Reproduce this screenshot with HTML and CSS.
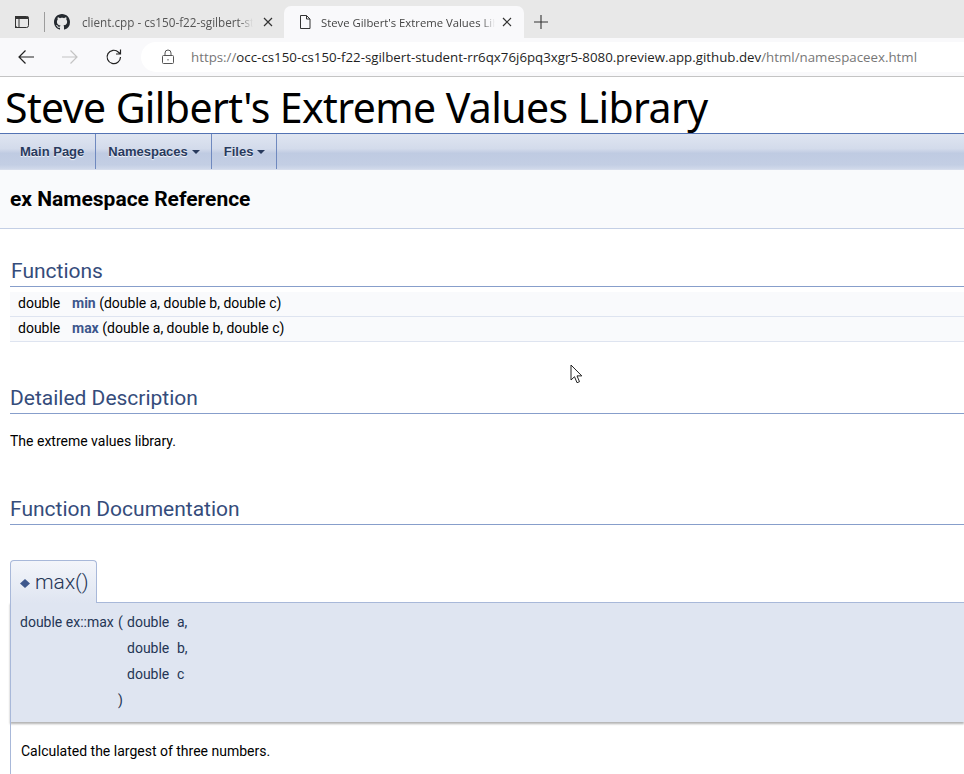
FILE: index.html

```html
<!DOCTYPE html>
<html lang="en">
<head>
  <meta charset="UTF-8">
  <title>Steve Gilbert's Extreme Values Library</title>
  <link rel="stylesheet" href="styles.css">
</head>
<body>
  <div class="tabstrip">
    <svg class="tab-actions" width="16" height="16" viewBox="0 0 16 16"><rect x="1.5" y="2.5" width="13" height="11" rx="2" fill="none" stroke="#333"/><rect x="1.5" y="2.5" width="13" height="2.5" fill="#333"/><rect x="1.5" y="2.5" width="3.5" height="11" fill="none" stroke="#333"/></svg>
    <span class="strip-sep"></span>
    <div class="tab">
      <svg class="favicon" width="16" height="16" viewBox="0 0 16 16"><path fill="#24292f" d="M8 0C3.58 0 0 3.58 0 8c0 3.54 2.29 6.53 5.47 7.59.4.07.55-.17.55-.38 0-.19-.01-.82-.01-1.49-2.01.37-2.53-.49-2.69-.94-.09-.23-.48-.94-.82-1.13-.28-.15-.68-.52-.01-.53.63-.01 1.08.58 1.23.82.72 1.21 1.87.87 2.33.66.07-.52.28-.87.51-1.07-1.78-.2-3.64-.89-3.64-3.95 0-.87.31-1.59.82-2.15-.08-.2-.36-1.02.08-2.12 0 0 .67-.21 2.2.82.64-.18 1.32-.27 2-.27s1.36.09 2 .27c1.53-1.04 2.2-.82 2.2-.82.44 1.1.16 1.92.08 2.12.51.56.82 1.27.82 2.15 0 3.07-1.87 3.75-3.65 3.95.29.25.54.73.54 1.48 0 1.07-.01 1.93-.01 2.2 0 .21.15.46.55.38A8.01 8.01 0 0 0 16 8c0-4.42-3.58-8-8-8z"/></svg>
      <span class="tab-title">client.cpp - cs150-f22-sgilbert-student</span>
      <svg class="tab-close" width="10" height="10" viewBox="0 0 10 10"><path d="M1 1l8 8M9 1l-8 8" stroke="#333" stroke-width="1.2"/></svg>
    </div>
    <div class="tab tab-active">
      <svg class="favicon" width="16" height="16" viewBox="0 0 16 16"><path d="M3.5 1.5h6l3.5 3.5v9.5h-9.5zM9.5 1.5v3.5h3.5" fill="none" stroke="#333"/></svg>
      <span class="tab-title">Steve Gilbert's Extreme Values Library</span>
      <svg class="tab-close" width="10" height="10" viewBox="0 0 10 10"><path d="M1 1l8 8M9 1l-8 8" stroke="#333" stroke-width="1.2"/></svg>
    </div>
    <svg class="new-tab" width="16" height="16" viewBox="0 0 16 16"><path d="M8 1v14M1 8h14" stroke="#333" stroke-width="1.1"/></svg>
  </div>

  <div class="toolbar">
    <svg class="nav-icon" width="18" height="18" viewBox="0 0 18 18"><path d="M17 9H2M8.5 2.5L2 9l6.500 6.500" fill="none" stroke="#222" stroke-width="1.2"/></svg>
    <svg class="nav-icon" width="18" height="18" viewBox="0 0 18 18"><path d="M1 9h15M9.5 2.5L16 9l-6.500 6.500" fill="none" stroke="#c4c4c4" stroke-width="1.2"/></svg>
    <svg class="nav-icon" width="18" height="18" viewBox="0 0 18 18"><path d="M15.500 9a6.700 6.700 0 1 1-2-4.800L15.500 6M15.500 1.500V6H11" fill="none" stroke="#222" stroke-width="1.2"/></svg>
    <div class="addressbar">
      <svg width="14" height="16" viewBox="0 0 14 16"><rect x="1.500" y="6.500" width="11" height="8" rx="1" fill="none" stroke="#555"/><path d="M4 6.500V4a3 3 0 0 1 6 0v2.500" fill="none" stroke="#555"/><rect x="6.500" y="10" width="1" height="1.500" fill="#555"/></svg>
      <span class="url"><span class="url-dim">https://</span>occ-cs150-cs150-f22-sgilbert-student-rr6qx76j6pq3xgr5-8080.preview.app.github.dev<span class="url-dim">/html/namespaceex.html</span></span>
    </div>
  </div>

  <div class="page">
    <div class="projectname">Steve Gilbert's Extreme Values Library</div>

    <nav class="navtabs">
      <a class="navtab">Main Page</a>
      <a class="navtab">Namespaces<span class="caret"></span></a>
      <a class="navtab">Files<span class="caret"></span></a>
    </nav>

    <div class="headertitle">ex Namespace Reference</div>

    <div class="contents">
      <h2 class="functions-heading">Functions</h2>
      <div class="memrow">
        <span class="memtype">double</span>
        <span><a class="el">min</a> (double a, double b, double c)</span>
      </div>
      <div class="memrow">
        <span class="memtype">double</span>
        <span><a class="el">max</a> (double a, double b, double c)</span>
      </div>

      <h2 class="groupheader detail-heading">Detailed Description</h2>
      <p class="textblock">The extreme values library.</p>

      <h2 class="groupheader doc-heading">Function Documentation</h2>

      <h2 class="memtitle"><svg class="permalink" width="10" height="9" viewBox="0 0 10 9"><path d="M5 0l5 4.500-5 4.500-5-4.500z" fill="#3d578c"/></svg>max()</h2>
      <div class="memproto">
        <div class="proto-grid">
          <span>double ex::max</span><span>(</span><span>double</span><span>a,</span>
          <span></span><span></span><span>double</span><span>b,</span>
          <span></span><span></span><span>double</span><span>c</span>
          <span></span><span>)</span><span></span><span></span>
        </div>
      </div>
      <div class="memdoc">
        <p>Calculated the largest of three numbers.</p>
      </div>
    </div>
  </div>

  <svg class="cursor" width="14" height="21" viewBox="0 0 14 21"><path d="M1 1v15l3.500-3.300 2.500 6 2.500-1-2.500-5.800h4.800z" fill="#fff" stroke="#222"/></svg>
</body>
</html>
```

FILE: styles.css

```css
html, body {
  margin: 0;
  height: 774px;
  overflow: hidden;
}
body {
  position: relative;
  background-color: #fff;
  color: #000;
  font-family: Roboto, sans-serif;
  font-size: 14px;
}

/* browser chrome */
.tabstrip {
  display: flex;
  align-items: flex-end;
  height: 38px;
  background-color: #e8e8e8;
  box-sizing: border-box;
  padding-left: 14px;
}
.tab-actions {
  margin-right: 14px;
  margin-bottom: 8px;
}
.strip-sep {
  width: 1px;
  height: 20px;
  background-color: #9c9c9c;
  margin-right: 9px;
  margin-bottom: 6px;
}
.tab {
  display: flex;
  align-items: center;
  width: 229px;
  height: 32px;
  box-sizing: border-box;
  padding-right: 10px;
  font-family: "Open Sans", sans-serif;
  font-size: 11.7px;
  color: #555;
}
.tab .favicon {
  margin-right: 12px;
}
.tab-active {
  width: 240px;
  margin-left: 1px;
  padding-left: 13px;
  padding-right: 12px;
  background-color: #f9f9fb;
  border-radius: 7px 7px 0 0;
  font-size: 11.3px;
  color: #444;
}
.tab-active .favicon {
  margin-right: 8px;
}
.tab-active .tab-close {
  margin-left: 7px;
}
.favicon {
  flex: none;
}
.tab-title {
  flex: 1;
  overflow: hidden;
  white-space: nowrap;
  -webkit-mask-image: linear-gradient(to right, #000 92%, transparent);
  mask-image: linear-gradient(to right, #000 92%, transparent);
}
.tab-close {
  flex: none;
  margin-left: 10px;
}
.new-tab {
  margin-left: 9px;
  margin-bottom: 8px;
}
.toolbar {
  display: flex;
  align-items: center;
  height: 38px;
  background-color: #f9f9fb;
  border-bottom: 1px solid #c4c4c4;
  padding-left: 17px;
  gap: 26px;
}
.addressbar {
  display: flex;
  align-items: center;
  flex: 1;
  gap: 16px;
  height: 30px;
  margin-left: -8px;
  padding-left: 20px;
  background-color: #fff;
  border-radius: 15px 0 0 15px;
}
.url {
  font-family: "Open Sans", sans-serif;
  font-size: 13.3px;
  color: #1f1f1f;
  white-space: nowrap;
}
.url-dim {
  color: #777;
}

/* doxygen page */
.projectname {
  height: 56px;
  line-height: 60px;
  padding-left: 5px;
  font-family: "Noto Sans", sans-serif;
  font-size: 41px;
  letter-spacing: -0.6px;
  white-space: nowrap;
}
.navtabs {
  display: flex;
  height: 35px;
  padding-left: 7px;
  border-top: 1px solid #5373b4;
  border-bottom: 1px solid #d6ddec;
  background: linear-gradient(#dfe5f1 0%, #d3dbeb 42%, #bfcbe2 55%, #c3cee4 88%, #d0d9ea 100%);
}
.navtab {
  display: flex;
  align-items: center;
  padding: 0 11px 0 12px;
  border-right: 1px solid #6f89bf;
  font-family: "Liberation Sans", Arial, sans-serif;
  font-size: 13px;
  font-weight: bold;
  color: #283a5d;
  text-shadow: 0 1px 1px rgba(255, 255, 255, 0.9);
}
.navtab:first-child {
  padding-left: 13px;
}
.caret {
  width: 0;
  height: 0;
  margin-left: 4px;
  border-left: 4px solid transparent;
  border-right: 4px solid transparent;
  border-top: 4px solid #283a5d;
}
.headertitle {
  height: 58px;
  line-height: 58px;
  padding-left: 10px;
  background-color: #f9fafc;
  border-bottom: 1px solid #c4cfe5;
  font-size: 21px;
  font-weight: bold;
}
.contents {
  padding-left: 10px;
}
.functions-heading,
.groupheader {
  margin: 0;
  font-size: 21px;
  font-weight: normal;
  line-height: 26px;
  color: #354c7b;
  border-bottom: 1px solid #879ecb;
}
.functions-heading {
  margin-top: 29px;
  margin-bottom: 5px;
  padding-left: 1px;
  padding-bottom: 2px;
}
.memrow {
  display: flex;
  height: 24px;
  line-height: 22px;
  background-color: #f9fafc;
  border-bottom: 1px solid #dee4f0;
}
.memtype {
  width: 62px;
  box-sizing: border-box;
  padding-left: 8px;
}
.el {
  font-weight: bold;
  color: #3d578c;
}
.detail-heading {
  margin-top: 43px;
  padding-bottom: 2px;
}
.textblock {
  margin: 19px 0 0;
  line-height: 16px;
}
.doc-heading {
  margin-top: 47px;
  padding-bottom: 2px;
}
/* sits over the top border of .memproto so the tab runs into it */
.memtitle {
  position: relative;
  z-index: 1;
  margin: 35px 0 -1px;
  box-sizing: border-box;
  width: 87px;
  height: 43px;
  line-height: 42px;
  padding-left: 9px;
  border: 1px solid #a8b8d9;
  border-bottom: none;
  border-radius: 4px 4px 0 0;
  background: linear-gradient(#f3f5fa, #dfe5f1);
  font-size: 21px;
  font-weight: 300;
  color: #253555;
}
.permalink {
  margin-right: 5px;
  vertical-align: 1px;
}
.memproto {
  box-sizing: border-box;
  height: 120px;
  padding: 6px 0 0 9px;
  background-color: #dfe5f1;
  border: 1px solid #a8b8d9;
  border-right: none;
  border-bottom: none;
  box-shadow: 0 2px 2px rgba(0, 0, 0, 0.3);
  color: #253555;
}
.proto-grid {
  display: grid;
  grid-template-columns: 98px 9px 50px auto;
  grid-auto-rows: 26px;
  justify-content: start;
  line-height: 26px;
}
.memdoc {
  border-left: 1px solid #a8b8d9;
  padding: 21px 0 40px 10px;
}
.memdoc p {
  margin: 0;
  line-height: 16px;
}

.cursor {
  position: absolute;
  left: 570px;
  top: 364px;
}
```
